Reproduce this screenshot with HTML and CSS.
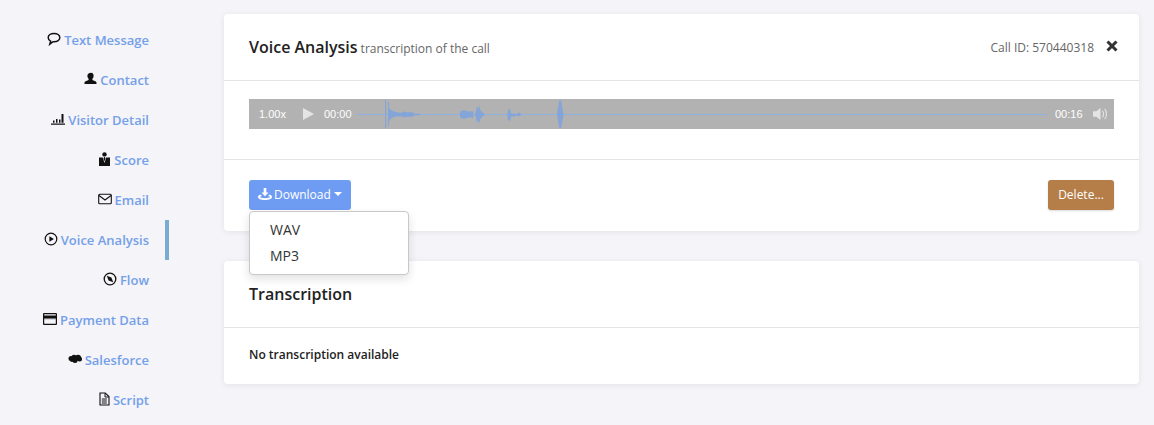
FILE: index.html
```html
<!DOCTYPE html>
<html lang="en">
<head>
    <meta charset="UTF-8">
    <title>Voice Analysis</title>
    <link rel="stylesheet" href="styles.css">
</head>
<body>
    <div class="layout">
        <!-- side menu -->
        <nav class="side-menu">
            <a class="menu-item">
                <svg class="menu-icon" viewBox="0 0 14 14"><path d="M7 1.500c3.300 0 5.800 1.700 5.800 4.100S10.300 9.700 7 9.700H6L2.800 12.200l.8-3C2.200 8.500 1.200 7.200 1.200 5.600 1.200 3.200 3.700 1.500 7 1.500z" fill="none" stroke="#111" stroke-width="1.500"/></svg>
                Text Message
            </a>
            <a class="menu-item">
                <svg class="menu-icon" viewBox="0 0 14 14"><path d="M8 .8c1.700 0 2.600 1.300 2.600 3 0 1.200-.5 2.300-1.200 3v1.300l2.900 1.200c.8.300 1.200.8 1.200 1.400V12H1.500v-1.300c0-.6.400-1.100 1.200-1.400l2.900-1.200V6.800C4.900 6.100 4.400 5 4.400 3.800 4.400 2.100 6.300.8 8 .8z" fill="#111"/></svg>
                Contact
            </a>
            <a class="menu-item">
                <svg class="menu-icon" viewBox="0 0 14 14"><path d="M0 11.500h14v1.200H0zM2 8.500h1.500v2.300H2zM5 7h1.500v3.800H5zM8 7.500h1.500v3.300H8zM10.500 2h2v8.800h-2z" fill="#111"/></svg>
                Visitor Detail
            </a>
            <a class="menu-item">
                <svg class="menu-icon" viewBox="0 0 14 14"><circle cx="7.500" cy="2.400" r="2.200" fill="#111"/><path d="M2 5.500h3.800L7.500 11l1.700-5.500H13V14H2zM7 5h1l.4 1.800-.9 2.700-.9-2.700z" fill="#111"/></svg>
                Score
            </a>
            <a class="menu-item">
                <svg class="menu-icon" viewBox="0 0 14 14"><rect x=".7" y="2.200" width="12.600" height="9.600" rx="1" fill="none" stroke="#111" stroke-width="1.100"/><path d="M1 3.500 7 8l6-4.500" fill="none" stroke="#111" stroke-width="1.100"/></svg>
                Email
            </a>
            <a class="menu-item active">
                <svg class="menu-icon" viewBox="0 0 14 14"><circle cx="7" cy="7" r="5.800" fill="none" stroke="#111" stroke-width="1.200"/><path d="M5.400 4.200 9.900 7l-4.500 2.800z" fill="#111"/></svg>
                Voice Analysis
            </a>
            <a class="menu-item">
                <svg class="menu-icon" viewBox="0 0 14 14"><circle cx="7" cy="7" r="5.800" fill="none" stroke="#111" stroke-width="1.300"/><path d="M3.800 3.800 8.400 5.600l1.800 4.600-4.600-1.800z" fill="#111"/></svg>
                Flow
            </a>
            <a class="menu-item">
                <svg class="menu-icon icon-wide" viewBox="0 0 14 12"><path d="M1.300 0h11.400C13.500 0 14 .5 14 1.300v9.400c0 .8-.5 1.300-1.300 1.300H1.300C.5 12 0 11.500 0 10.700V1.300C0 .5.500 0 1.300 0zM1.200 1.200v1.300h11.600V1.200zM1.200 5.500v5.300h11.600V5.500z" fill="#111" fill-rule="evenodd"/><path d="M1.200 5.500h11.600v1H1.200z" fill="#111" opacity=".25"/></svg>
                Payment Data
            </a>
            <a class="menu-item">
                <svg class="menu-icon" viewBox="0 0 14 10"><circle cx="3" cy="4.500" r="2.500" fill="#111"/><circle cx="6" cy="3.200" r="2.500" fill="#111"/><circle cx="10" cy="3.800" r="3" fill="#111"/><circle cx="11.500" cy="5" r="2.500" fill="#111"/><circle cx="7" cy="6.500" r="2.500" fill="#111"/><circle cx="4" cy="6" r="2" fill="#111"/></svg>
                Salesforce
            </a>
            <a class="menu-item">
                <svg class="menu-icon" viewBox="0 0 14 14"><path d="M4 1h5.200l3.800 3.600V13H4z" fill="none" stroke="#111" stroke-width="1.100"/><path d="M9 1.300V5h3.800M5.800 7h5M5.800 9h5M5.800 11h5" fill="none" stroke="#111"/></svg>
                Script
            </a>
        </nav>

        <main class="content">
            <!-- voice analysis card -->
            <section class="card">
                <div class="card-header">
                    <div class="title-group"><span class="card-title">Voice Analysis</span><span class="card-sub">transcription of the call</span></div>
                    <div class="call-info">
                        <span>Call ID: 570440318</span>
                        <svg class="close-icon" viewBox="0 0 12 12"><path d="M1.500 1.500l9 9M10.500 1.500l-9 9" fill="none" stroke="#333" stroke-width="3"/></svg>
                    </div>
                </div>
                <div class="player-section">
                    <div class="player">
                        <span class="speed">1.00x</span>
                        <svg class="play-icon" viewBox="0 0 11 12"><path d="M0 0l11 6-11 6z" fill="#e4e4e4"/></svg>
                        <span class="time">00:00</span>
                        <svg class="wave" viewBox="0 0 690 30" preserveAspectRatio="none">
                            <path d="M0 15.500h690" stroke="#8fb0e2" stroke-width="1"/>
                            <g fill="#7ea3de" opacity=".85">
                                <path d="M28 1h1.200v28H28zM31 3h1v24h-1zM32 9c2 3 5 3.500 9 4.500 2 .3 4 .6 5 .6v2.800c-2 0-5 .3-7 .6-3 .8-5 1.500-7 5zM44 13.500l4-1 3 1 3-.5 3 1v3l-3 1-3-.5-3 1-4-1zM57 14.700h6v1.600h-6z"/>
                                <path d="M104 12c1.500-1 4-1 6 0l3 .8 2-.8c1 0 1.500 1 1.500 3.500S116 19 115 19l-2-.8-3 .8c-2 1-4.500 1-6 0-1.500-1-1.500-6 0-7zM118 15.500c.8-2 1.200-5 2-8l1.500 2 1-3 1 5c1 1 3 2.500 4.500 4-1.500 1.500-3.500 3-4.500 4l-1 5-1-3-1.500 2c-.8-3-1.200-6-2-8z"/>
                                <path d="M151 11l2-1 1 4 1.500 1 1.500-1 1 1 3 .5v1l-3 .5-1 1-1.500-1-1.500 1-1 4-2-1c-.8-3-.8-6 0-9zM160 14.500l2-1 2 1.500v1l-2 1.500-2-1z"/>
                                <path d="M200 15.500c.8-5 1.500-10 2.300-14h2c.5 4 1.500 9 2.200 14-.7 5-1.700 10-2.200 13.500h-2c-.8-3.500-1.500-8.500-2.300-13.500z"/>
                            </g>
                        </svg>
                        <span class="time time-end">00:16</span>
                        <svg class="volume-icon" viewBox="0 0 16 14"><path d="M0 4h3.500L8 .5v13L3.500 10H0z" fill="#e4e4e4"/><path d="M10 3.500c1.500 2 1.500 5 0 7M12.500 1.500c2.500 3 2.500 8 0 11" fill="none" stroke="#e4e4e4" stroke-width="1.200"/></svg>
                    </div>
                </div>
                <div class="card-footer">
                    <div class="dropdown">
                        <button class="btn btn-download">
                            <svg class="download-icon" viewBox="0 0 14 13"><path d="M5.700 0h2.600v4.500h2.200L7 8.300 3.500 4.500h2.200zM2.500 6.500 4 8c-1.300.3-2 .6-2 1 0 .7 2.200 1.200 5 1.200s5-.5 5-1.200c0-.4-.7-.7-2-1l1.500-1.500c1.500.5 2.500 1.200 2.500 2.500 0 1.900-3 3-7 3s-7-1.100-7-3c0-1.300 1-2 2.500-2.500z" fill="#fff"/></svg>
                            Download
                            <span class="caret"></span>
                        </button>
                        <ul class="dropdown-menu">
                            <li>WAV</li>
                            <li>MP3</li>
                        </ul>
                    </div>
                    <button class="btn btn-delete">Delete...</button>
                </div>
            </section>

            <!-- transcription card -->
            <section class="card">
                <div class="card-header">
                    <span class="card-title">Transcription</span>
                </div>
                <div class="card-body">No transcription available</div>
            </section>
        </main>
    </div>
</body>
</html>
```

FILE: styles.css
```css
* {
    box-sizing: border-box;
}

body {
    font-family: "Open Sans", Arial, sans-serif;
    background-color: #f4f4f9;
    margin: 0;
    padding: 0;
    color: #222;
}

.layout {
    display: flex;
    height: 425px;
    overflow: hidden;
}

.side-menu {
    width: 169px;
    padding-top: 20px;
    flex-shrink: 0;
}

.menu-item {
    display: flex;
    justify-content: flex-end;
    align-items: center;
    gap: 3px;
    height: 40px;
    padding-right: 20px;
    color: #74a0e8;
    font-size: 13px;
    font-weight: 600;
    white-space: nowrap;
}

.menu-item.active {
    border-right: 4px solid #7aaccf;
    padding-right: 16px;
}

.menu-icon {
    width: 14px;
    height: 14px;
    margin-top: -3px;
}

.icon-wide {
    width: 14px;
    height: 12px;
}

.content {
    margin-left: 55px;
    padding-top: 14px;
    width: 915px;
}

.card {
    background-color: white;
    border-radius: 4px;
    box-shadow: 0 1px 6px rgba(0, 0, 0, 0.08);
    margin-bottom: 30px;
}

.card-header {
    display: flex;
    justify-content: space-between;
    align-items: center;
    height: 67px;
    padding: 0 21px 0 25px;
    border-bottom: 1px solid #e4e4e4;
}

.title-group {
    display: flex;
    align-items: baseline;
    gap: 3px;
}

.card-title {
    font-size: 16px;
    font-weight: 600;
    color: #222;
}

.card-sub {
    font-size: 12px;
    color: #666;
}

.call-info {
    display: flex;
    align-items: center;
    gap: 12px;
    font-size: 12px;
    color: #666;
}

.close-icon {
    width: 12px;
    height: 12px;
    margin-top: -3px;
}

.player-section {
    height: 79px;
    padding: 18px 25px 0;
    border-bottom: 1px solid #e4e4e4;
}

.player {
    display: flex;
    align-items: center;
    height: 30px;
    padding-left: 10px;
    background-color: #b2b2b2;
    color: white;
    font-family: "Liberation Sans", Arial, sans-serif;
    font-size: 11px;
}

.speed {
    width: 44px;
}

.play-icon {
    width: 11px;
    height: 12px;
    margin-right: 10px;
}

.time {
    width: 28px;
}

.wave {
    width: 690px;
    height: 30px;
    margin: 0 8px 0 5px;
}

.volume-icon {
    width: 15px;
    height: 14px;
    margin-left: 10px;
}

.card-footer {
    display: flex;
    justify-content: space-between;
    height: 71px;
    padding: 20px 25px 0;
}

.dropdown {
    position: relative;
}

.btn {
    height: 30px;
    padding-bottom: 2px;
    border: none;
    border-radius: 3px;
    color: white;
    font-family: inherit;
    font-size: 12px;
    cursor: pointer;
}

.btn-download {
    display: flex;
    align-items: center;
    gap: 2px;
    width: 102px;
    padding: 0 9px 2px;
    background-color: #6f9cf3;
}

.download-icon {
    width: 14px;
    height: 13px;
}

.caret {
    margin-left: 1px;
    border-top: 4px solid white;
    border-left: 4px solid transparent;
    border-right: 4px solid transparent;
}

.btn-delete {
    width: 66px;
    background-color: #b57d48;
    box-shadow: 0 1px 2px rgba(0, 0, 0, 0.15);
}

.dropdown-menu {
    position: absolute;
    top: 31px;
    left: 0;
    width: 160px;
    height: 64px;
    margin: 0;
    padding: 5px 0 0;
    list-style: none;
    background-color: white;
    border: 1px solid #c8c8c8;
    border-radius: 4px;
    box-shadow: 0 4px 10px rgba(0, 0, 0, 0.12);
    font-size: 14px;
    color: #333;
}

.dropdown-menu li {
    height: 26px;
    line-height: 26px;
    padding-left: 20px;
}

.card-body {
    height: 56px;
    padding: 18px 25px 0;
    font-size: 12px;
    font-weight: 600;
    color: #222;
}
```
